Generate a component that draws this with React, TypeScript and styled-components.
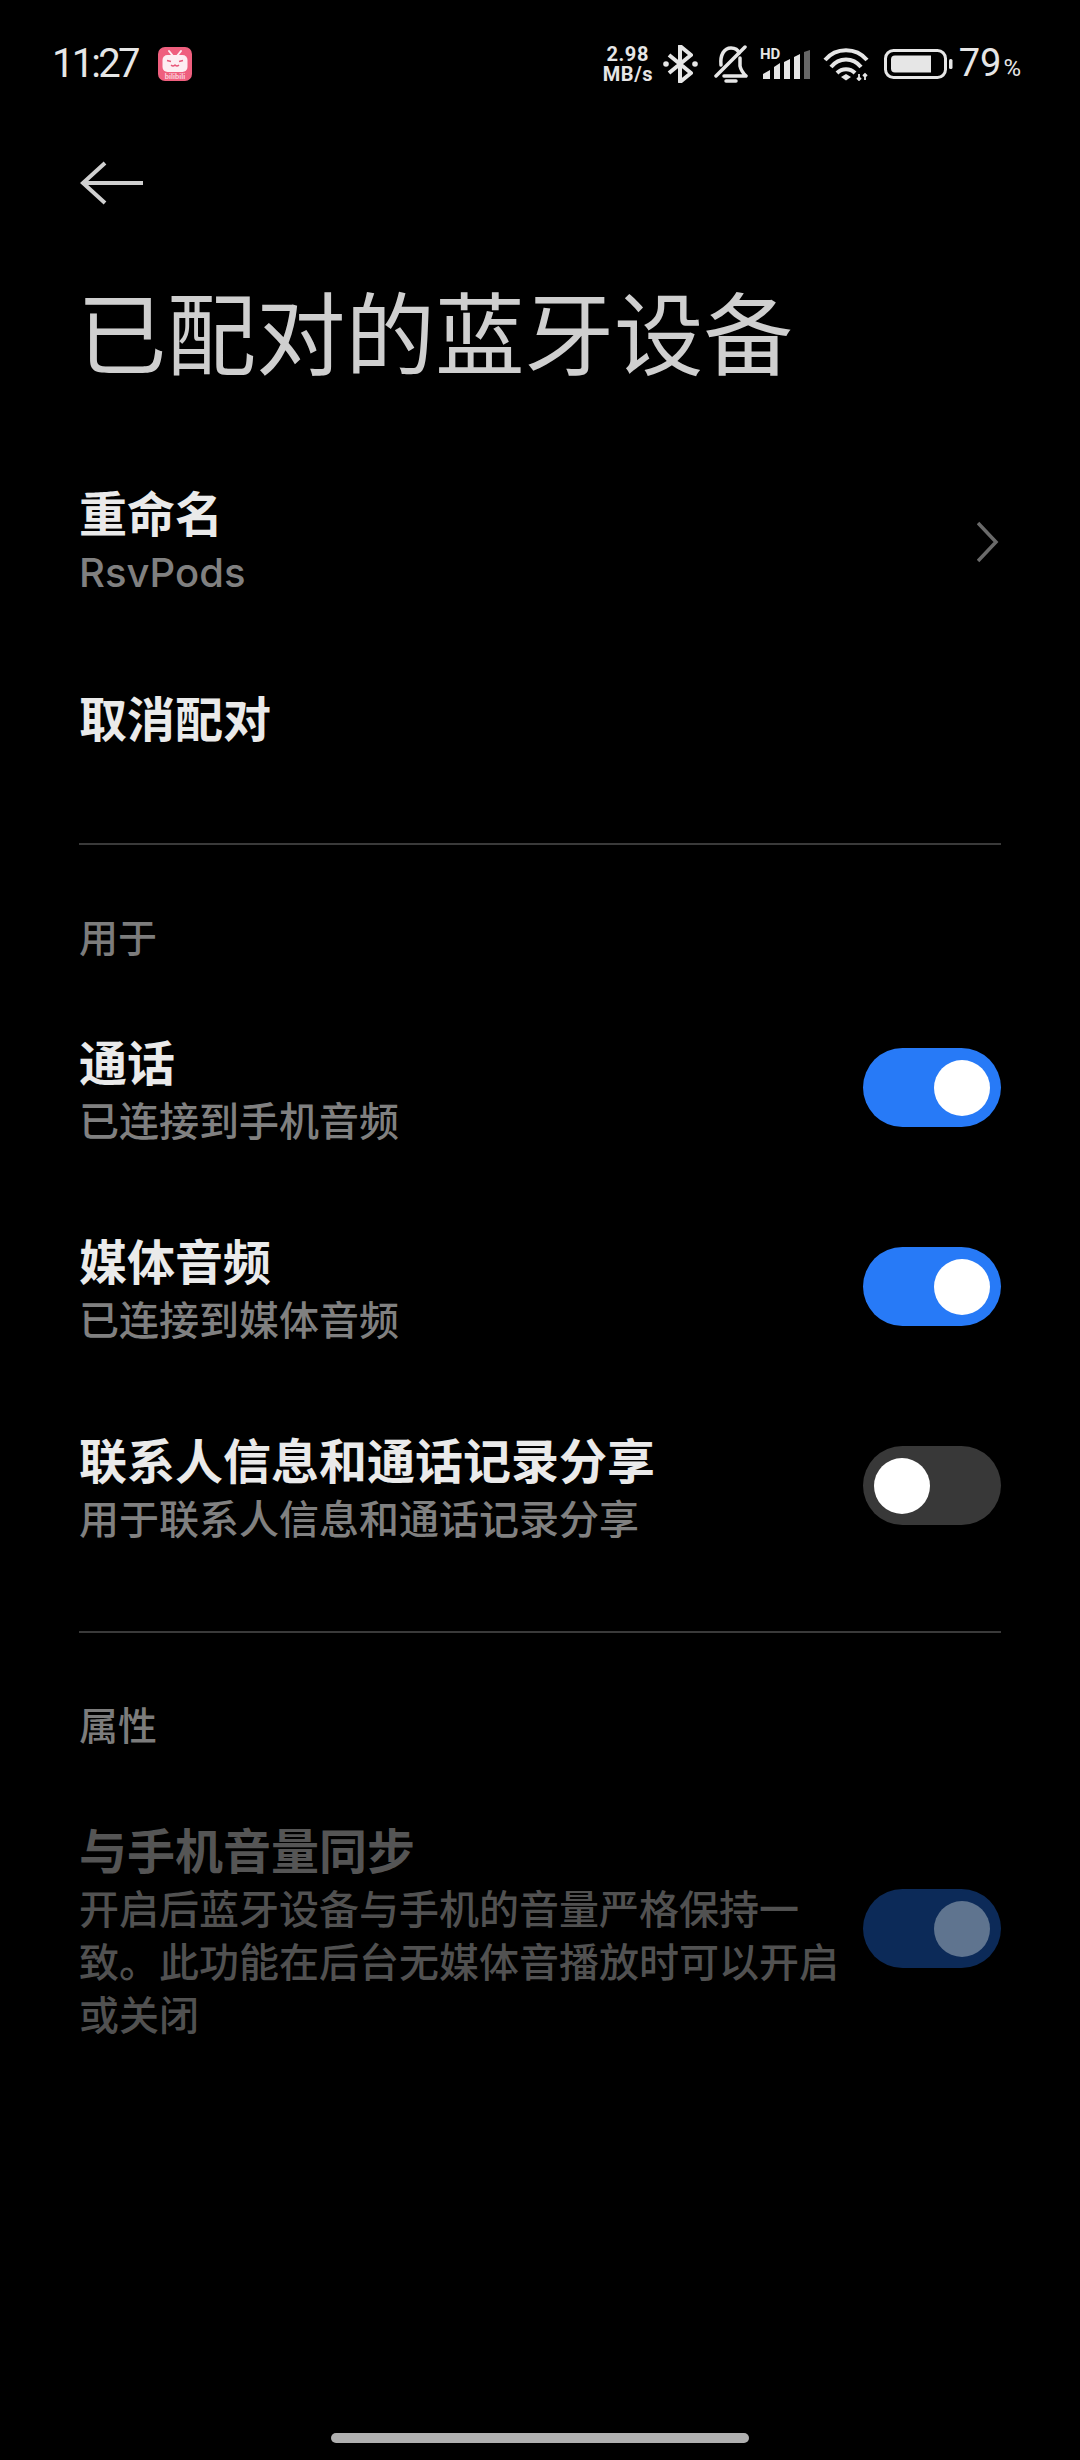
import React from 'react';
import styled, {createGlobalStyle} from 'styled-components';

const GlobalStyle = createGlobalStyle`
  html, body {
    margin: 0;
    padding: 0;
    background: #000;
  }
  body {
    font-family: "Noto Sans CJK SC", "Noto Sans", sans-serif;
  }
`;

const Page = styled.div`
  position: relative;
  width: 1080px;
  height: 2460px;
  background: #000;
  overflow: hidden;
  display: flex;
  flex-direction: column;
`;

const StatusBar = styled.div`
  height: 64px;
  margin-top: 32px;
  padding: 0 59px 0 52px;
  display: flex;
  align-items: center;
  justify-content: space-between;
  color: #e6e6e6;
`;

const StatusLeft = styled.div`
  display: flex;
  align-items: center;
  gap: 20px;
`;

const Clock = styled.span`
  font-family: Roboto, sans-serif;
  font-size: 40px;
  line-height: 40px;
  letter-spacing: -2.8px;
`;

const StatusRight = styled.div`
  display: flex;
  align-items: center;
`;

const Speed = styled.div`
  width: 50px;
  margin-right: 10px;
  font-family: Roboto, sans-serif;
  font-size: 20px;
  line-height: 20px;
  font-weight: 700;
  letter-spacing: 0.6px;
  text-align: center;
  white-space: nowrap;
`;

const StatusIcon = styled.svg<{$gap: number}>`
  display: block;
  flex: none;
  margin-right: ${p => p.$gap}px;
`;

const Battery = styled.span`
  font-family: Roboto, sans-serif;
  font-size: 38px;
  line-height: 38px;
  padding-top: 2px;
  small {
    font-size: 24px;
    margin-left: 2px;
  }
`;

const BackButton = styled.div`
  margin: 63px 0 0 79px;
  height: 48px;
  display: flex;
  align-items: center;
`;

const Title = styled.h1`
  margin: 62px 0 0 77px;
  font-size: 89.5px;
  line-height: 120px;
  font-weight: 400;
  color: #cfcfcf;
  white-space: nowrap;
`;

const Row = styled.div`
  display: flex;
  align-items: center;
  justify-content: space-between;
  padding: 0 79px;
`;

const RowText = styled.div`
  display: flex;
  flex-direction: column;
`;

const RowTitle = styled.div<{$dim?: boolean}>`
  font-size: 48px;
  line-height: 62px;
  font-weight: 700;
  color: ${p => (p.$dim ? '#555' : '#eaeaea')};
  white-space: nowrap;
`;

const RowSub = styled.div<{$dim?: boolean}>`
  font-size: 40px;
  line-height: 53px;
  font-weight: 500;
  color: ${p => (p.$dim ? '#515151' : '#808080')};
  width: 760px;
  padding-top: 2px;
`;

const RenameSub = styled.div`
  font-family: Inter, sans-serif;
  font-size: 40px;
  line-height: 62px;
  font-weight: 500;
  color: #808080;
`;

const Divider = styled.div`
  height: 2px;
  margin: 0 79px;
  background: #3a3a3a;
`;

const SectionLabel = styled.div`
  margin: 0 0 0 79px;
  font-size: 39px;
  line-height: 56px;
  font-weight: 500;
  color: #7c7c7c;
`;

const Track = styled.div<{$on: boolean; $dim?: boolean}>`
  width: 138px;
  height: 79px;
  flex: none;
  box-sizing: border-box;
  padding: 0 11px;
  border-radius: 40px;
  display: flex;
  align-items: center;
  justify-content: ${p => (p.$on ? 'flex-end' : 'flex-start')};
  background: ${p => (p.$dim ? '#0c2a58' : p.$on ? '#277af7' : '#383838')};
`;

const Knob = styled.div<{$dim?: boolean}>`
  width: 56px;
  height: 56px;
  border-radius: 50%;
  background: ${p => (p.$dim ? '#5f748f' : '#fff')};
`;

const HomeBar = styled.div`
  position: absolute;
  left: 331px;
  bottom: 17px;
  width: 418px;
  height: 10px;
  border-radius: 5px;
  background: #b0b0b0;
`;

const Spacer = styled.div<{$h: number}>`
  height: ${p => p.$h}px;
  flex: none;
`;

const Toggle: React.FC<{on: boolean; dim?: boolean}> = ({on, dim}) => (
  <Track $on={on} $dim={dim}>
    <Knob $dim={dim} />
  </Track>
);

const BiliIcon = () => (
  <svg width="34" height="34" viewBox="0 0 34 34">
    <rect width="34" height="34" rx="7" fill="#ef5f7e" />
    <path d="M11 4l4 5M23 4l-4 5" stroke="#fdeef2" strokeWidth="2" strokeLinecap="round" />
    <rect x="4.500" y="8" width="25" height="17" rx="5" fill="#fdeef2" />
    <path d="M9 13.500l4 1M25 13.500l-4 1M13 18q2 2 4 0q2 2 4 0" stroke="#e8587a" strokeWidth="1.300" fill="none" />
    <text x="17" y="32" textAnchor="middle" fill="#fbd0da" fontFamily="Roboto, sans-serif" fontSize="7.500" fontWeight="700">
      bilibili
    </text>
  </svg>
);

const BluetoothIcon = () => (
  <StatusIcon $gap={15} width="36" height="38" viewBox="0 0 36 38" fill="none" stroke="#e6e6e6" strokeWidth="4">
    <path d="M6 10l22 18-11 9V1l11 9L6 28" strokeLinejoin="round" />
    <circle cx="3" cy="19" r="2.800" fill="#e6e6e6" stroke="none" />
    <circle cx="32" cy="19" r="2.800" fill="#e6e6e6" stroke="none" />
  </StatusIcon>
);

const BellOffIcon = () => (
  <StatusIcon $gap={12} width="34" height="38" viewBox="0 0 34 38" fill="none" stroke="#e6e6e6" strokeWidth="3.500">
    <path d="M7 20C6 10 10 3 17 3c4 0 7 2 8 5" strokeLinecap="round" />
    <path d="M26 13v8q1 5 6 10H10" strokeLinecap="round" strokeLinejoin="round" />
    <path d="M12 36h10" strokeLinecap="round" />
    <path d="M2 31L31 2" strokeLinecap="round" />
  </StatusIcon>
);

const SignalIcon = () => (
  <StatusIcon $gap={13} width="50" height="36" viewBox="0 0 50 36">
    <text x="0" y="13" fill="#e6e6e6" fontFamily="Roboto, sans-serif" fontSize="15" fontWeight="700">
      HD
    </text>
    <path d="M3 33v-5l7-4v9zM14 33V21l6-4v16zM24 33V16l6-3v20zM34 33V11l6-3v25z" fill="#e6e6e6" />
    <path d="M44 33V6l6-2v29z" fill="#666" />
  </StatusIcon>
);

const WifiIcon = () => (
  <StatusIcon $gap={15} width="46" height="34" viewBox="0 0 46 34" fill="none" stroke="#e6e6e6" strokeWidth="4">
    <path d="M2 13C13 0 33 0 44 13" />
    <path d="M8 20C16 10 30 10 38 20" />
    <path d="M14 26c5-5 13-5 18 0" />
    <path d="M18 30l5-3 5 3-5 3.500z" fill="#e6e6e6" stroke="none" />
    <path d="M36 27v6M34 31l2 2 2-2M42 33v-6M40 29l2-2 2 2" strokeWidth="1.800" />
  </StatusIcon>
);

const BatteryIcon = () => (
  <StatusIcon $gap={5} width="70" height="30" viewBox="0 0 70 30">
    <rect x="1.500" y="1.500" width="60" height="27" rx="8" fill="none" stroke="#e6e6e6" strokeWidth="3" />
    <path d="M11 6.500h36v17H11a4 4 0 0 1-4-4v-9a4 4 0 0 1 4-4z" fill="#e6e6e6" />
    <rect x="65" y="10" width="3.500" height="10" rx="1.500" fill="#e6e6e6" />
  </StatusIcon>
);

const App: React.FC = () => (
  <Page>
    <GlobalStyle />
    <StatusBar>
      <StatusLeft>
        <Clock>11:27</Clock>
        <BiliIcon />
      </StatusLeft>
      <StatusRight>
        <Speed>
          2.98
          <br />
          MB/s
        </Speed>
        <BluetoothIcon />
        <BellOffIcon />
        <SignalIcon />
        <WifiIcon />
        <BatteryIcon />
        <Battery>
          79<small>%</small>
        </Battery>
      </StatusRight>
    </StatusBar>

    <BackButton>
      <svg width="65" height="46" viewBox="0 0 65 46" fill="none" stroke="#d0d0d0" strokeWidth="4">
        <path d="M64 23H4M26 3L4 23l22 20" />
      </svg>
    </BackButton>

    <Title>已配对的蓝牙设备</Title>

    <Spacer $h={91} />
    <Row>
      <RowText>
        <RowTitle>重命名</RowTitle>
        <RenameSub>RsvPods</RenameSub>
      </RowText>
      <svg width="24" height="42" viewBox="0 0 24 42" fill="none" stroke="#6a6a6a" strokeWidth="3.500">
        <path d="M1 2l18 19L1 40" />
      </svg>
    </Row>
    <Spacer $h={81} />
    <Row>
      <RowTitle>取消配对</RowTitle>
    </Row>
    <Spacer $h={96} />
    <Divider />
    <Spacer $h={62} />
    <SectionLabel>用于</SectionLabel>
    <Spacer $h={66} />
    <Row>
      <RowText>
        <RowTitle>通话</RowTitle>
        <RowSub>已连接到手机音频</RowSub>
      </RowText>
      <Toggle on />
    </Row>
    <Spacer $h={82} />
    <Row>
      <RowText>
        <RowTitle>媒体音频</RowTitle>
        <RowSub>已连接到媒体音频</RowSub>
      </RowText>
      <Toggle on />
    </Row>
    <Spacer $h={82} />
    <Row>
      <RowText>
        <RowTitle>联系人信息和通话记录分享</RowTitle>
        <RowSub>用于联系人信息和通话记录分享</RowSub>
      </RowText>
      <Toggle on={false} />
    </Row>
    <Spacer $h={87} />
    <Divider />
    <Spacer $h={62} />
    <SectionLabel>属性</SectionLabel>
    <Spacer $h={66} />
    <Row>
      <RowText>
        <RowTitle $dim>与手机音量同步</RowTitle>
        <RowSub $dim>开启后蓝牙设备与手机的音量严格保持一致。此功能在后台无媒体音播放时可以开启或关闭</RowSub>
      </RowText>
      <Toggle on dim />
    </Row>
    <HomeBar />
  </Page>
);

export default App;
